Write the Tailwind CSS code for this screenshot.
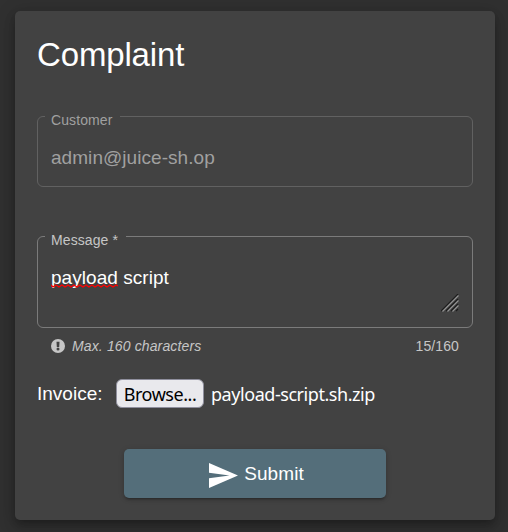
<!DOCTYPE html>
<html lang="en">
<head>
<meta charset="utf-8">
<title>Complaint</title>
<script src="https://cdn.jsdelivr.net/npm/@tailwindcss/browser@4"></script>
</head>
<body class="h-[532px] overflow-hidden bg-[#303030] pl-[15px] pr-[13px] pt-[11px] font-['Liberation_Sans',Arial,sans-serif] text-white">
<main class="flex h-[509px] w-[480px] flex-col rounded-[5px] bg-[#424242] px-[22px] pt-[24px] shadow-[0_4px_6px_-2px_rgba(0,0,0,0.2),0_7px_12px_1px_rgba(0,0,0,0.14),0_2px_18px_3px_rgba(0,0,0,0.12)]">
  <h1 class="h-[81px] text-[33px] leading-[40px] tracking-[-0.15px]">Complaint</h1>

  <div class="relative h-[71px] shrink-0 rounded-[6px] border border-[#616161] px-[13px] pt-[29px]">
    <label class="absolute -top-[6px] left-[7px] bg-[#424242] pl-[6px] pr-[8px] text-[14px] leading-[18px] tracking-[0.1px] text-[#a0a0a0]">Customer</label>
    <div class="text-[19px] leading-[24px] tracking-[0.05px] text-[#a0a0a0]">admin@juice-sh.op</div>
  </div>

  <div class="relative mt-[49px] h-[92px] shrink-0 rounded-[6px] border border-[#7b7b7b] px-[13px] pt-[29px]">
    <label class="absolute -top-[6px] left-[7px] bg-[#424242] pl-[6px] pr-[8px] text-[14px] leading-[18px] tracking-[0.1px] text-[#c6c6c6]">Message *</label>
    <div class="text-[19px] leading-[24px] tracking-[0.05px]"><span class="relative">payload<svg class="absolute left-0 top-[17px] h-[4px] w-[67px]" viewBox="0 0 67 4" fill="none" stroke="#f00" stroke-width="1.3"><path d="M0 1l2 2l3-2l3 2l3-2l3 2l3-2l3 2l3-2l3 2l3-2l3 2l3-2l3 2l3-2l3 2l3-2l3 2l3-2l3 2l3-2l3 2l3-2l2 1"/></svg></span> script</div>
    <svg class="absolute bottom-[15px] right-[13px] h-[18px] w-[18px]" viewBox="0 0 18 18" fill="none">
      <path stroke="#1c1c1c" stroke-width="1.1" d="M0 17L17 0M5 17L17 5M10 17L17 10M15 17L17 15"/>
      <path stroke="#949494" stroke-width="1.1" d="M1.5 17.5L17.5 1.5M6.5 17.5L17.5 6.5M11.5 17.5L17.5 11.5"/>
    </svg>
  </div>

  <div class="mt-[9px] flex h-[18px] items-center px-[14px] text-[14px] leading-[18px] text-[#c6c6c6]">
    <svg class="mr-[7px] h-[14px] w-[14px]" viewBox="0 0 14 14"><circle cx="7" cy="7" r="7" fill="#c6c6c6"/><path fill="#424242" d="M5.5 2.8h3l-.3 5.2H5.8z"/><circle cx="7" cy="10.1" r="1.5" fill="#424242"/></svg>
    <em class="tracking-[0.13px]">Max. 160 characters</em>
    <span class="ml-auto tracking-[0.1px]">15/160</span>
  </div>

  <div class="mt-[24px] flex h-[29px] items-center text-[19px]">
    <label class="w-[79px] pt-px leading-[24px]">Invoice:</label>
    <button class="h-[29px] w-[88px] rounded-[6px] border border-[#8f8f9d] bg-[#e9e9ed] font-['Noto_Sans',sans-serif] text-[18px] leading-[26px] tracking-[-0.45px] text-black">Browse...</button>
    <span class="ml-[7px] whitespace-nowrap font-['Noto_Sans',sans-serif] text-[18px] leading-[26px] tracking-[-0.45px]">payload-script.sh.zip</span>
  </div>

  <button class="mt-[41px] flex h-[49px] w-[262px] items-center justify-center self-center rounded-[5px] bg-[#546e7a] pl-[3px] text-[19px] leading-[24px] shadow-[0_3px_2px_-2px_rgba(0,0,0,0.2),0_2px_3px_rgba(0,0,0,0.14),0_1px_6px_rgba(0,0,0,0.12)]">
    <svg class="mr-[6px] mt-[3px] h-[25px] w-[29px]" viewBox="0 0 29 25" fill="#fff"><path d="M0 0L29 12.5L0 25V15.3L20.5 12.5L0 9.7z"/></svg>
    <span class="tracking-[0.1px]">Submit</span>
  </button>
</main>
</body>
</html>
